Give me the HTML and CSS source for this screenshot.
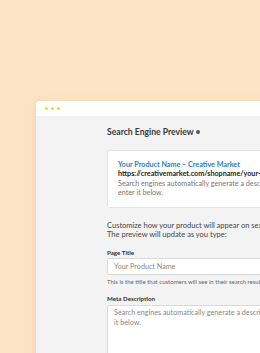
FILE: index.html
```html
<!DOCTYPE html>
<html>
<head>
<meta charset="utf-8">
<link rel="stylesheet" href="styles.css">
</head>
<body>
<div class="window">
  <div class="titlebar">
    <span class="dot"></span><span class="dot"></span><span class="dot"></span>
  </div>
  <div class="content">
    <h1 class="heading">Search Engine Preview <span class="info"></span></h1>
    <div class="card">
      <div class="card-title">Your Product Name – Creative Market</div>
      <div class="card-url">https://creativemarket.com/shopname/your-product-name</div>
      <div class="card-desc">Search engines automatically generate a description, or you can enter it below.</div>
    </div>
    <p class="intro">Customize how your product will appear on search engines.<br>The preview will update as you type:</p>
    <label class="label">Page Title</label>
    <div class="input">Your Product Name</div>
    <p class="hint">This is the title that customers will see in their search results.</p>
    <label class="label">Meta Description</label>
    <div class="textarea">Search engines automatically generate a description, or you can enter it below.</div>
  </div>
</div>
</body>
</html>
```

FILE: styles.css
```css
html, body {
  margin: 0;
  padding: 0;
}
body {
  width: 260px;
  height: 353px;
  overflow: hidden;
  background: #fde3c5;
  font-family: Lato, "Open Sans", sans-serif;
  padding: 101px 0 0 36px;
  box-sizing: border-box;
}
.window {
  width: 360px;
  height: 300px;
  border-radius: 4px 0 0 0;
  overflow: hidden;
  background: #f3f3f3;
  box-shadow: 0 2px 10px rgba(160, 110, 60, 0.18);
}
.titlebar {
  height: 15px;
  background: #ffffff;
  display: flex;
  align-items: center;
  gap: 3px;
  padding-left: 9px;
}
.dot {
  width: 3px;
  height: 3px;
  border-radius: 50%;
  background: #f0dc16;
}
.content {
  padding: 11px 0 0 71px;
  color: #333;
}
.heading {
  margin: 0;
  font-size: 8.6px;
  line-height: 10px;
  font-weight: 700;
  color: #3a3a3a;
  display: flex;
  align-items: center;
  gap: 2px;
}
.info {
  width: 4px;
  height: 4px;
  border-radius: 50%;
  background: #555;
}
.card {
  margin-top: 13px;
  background: #fff;
  border: 1px solid #e4e4e4;
  border-radius: 3px;
  padding: 9px 10px 10px 10px;
  white-space: nowrap;
  font-size: 7.2px;
  line-height: 9px;
}
.card-title {
  color: #2d7fc1;
  font-weight: 700;
}
.card-url {
  color: #222;
  font-weight: 700;
}
.card-desc {
  color: #777;
  margin-top: 1px;
  white-space: normal;
  width: 200px;
  line-height: 9px;
}
.intro {
  margin: 13px 0 0;
  font-size: 7.5px;
  line-height: 9px;
  color: #444;
  white-space: nowrap;
}
.label {
  display: block;
  margin-top: 10px;
  font-size: 6.2px;
  line-height: 7px;
  font-weight: 700;
  color: #333;
}
.input {
  margin-top: 2px;
  height: 15px;
  background: #fff;
  border: 1px solid #dadada;
  border-radius: 2px;
  padding: 0 6px;
  font-size: 7.2px;
  line-height: 15px;
  color: #888;
}
.hint {
  margin: 3px 0 0;
  font-size: 6px;
  line-height: 7px;
  color: #666;
  white-space: nowrap;
}
.textarea {
  margin-top: 3px;
  height: 80px;
  background: #fff;
  border: 1px solid #dadada;
  border-radius: 2px;
  padding: 2px 6px;
  font-size: 7.2px;
  line-height: 10px;
  color: #888;
  width: 219px;
}
```
